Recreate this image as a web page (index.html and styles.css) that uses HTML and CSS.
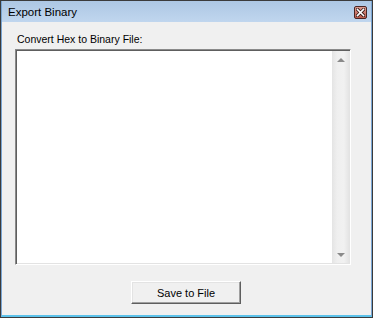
FILE: index.html
```html
<!DOCTYPE html>
<html lang="en">
<head>
    <meta charset="UTF-8">
    <title>Export Binary</title>
    <link rel="stylesheet" href="styles.css">
</head>
<body>

    <div class="window">
        <div class="titlebar">
            <span class="title">Export Binary</span>
            <span class="close">
                <svg width="9" height="9" viewBox="0 0 9 9">
                    <path d="M1.5 1.5 L7.5 7.5 M7.5 1.5 L1.5 7.5" stroke="#3a1a18" stroke-width="3.2" stroke-linecap="square"/>
                    <path d="M1.5 1.5 L7.5 7.5 M7.5 1.5 L1.5 7.5" stroke="#ffffff" stroke-width="1.6" stroke-linecap="square"/>
                </svg>
            </span>
        </div>

        <div class="content">
            <label for="hex" class="field-label">Convert Hex to Binary File:</label>
            <div class="editor">
                <div id="hex" class="editor-text"></div>
                <div class="scrollbar">
                    <span class="arrow arrow-up"></span>
                    <span class="track"></span>
                    <span class="arrow arrow-down"></span>
                </div>
            </div>
            <div class="actions">
                <button type="button" class="btn">Save to File</button>
            </div>
        </div>
    </div>

</body>
</html>
```

FILE: styles.css
```css
body {
    margin: 0;
    padding: 0;
    font-family: 'Liberation Sans', Arial, sans-serif;
    font-size: 11px;
    color: #000;
    background-color: #f0f0f0;
}

.window {
    width: 373px;
    height: 318px;
    box-sizing: border-box;
    border: 1px solid #3b3b3b;
    display: flex;
    flex-direction: column;
}

.titlebar {
    height: 21px;
    display: flex;
    align-items: center;
    justify-content: space-between;
    padding: 0 4px 0 6px;
    border-left: 1px solid #7aa6d4;
    border-right: 1px solid #7aa6d4;
    background: linear-gradient(#adc7e4, #c0d6ee);
}

.title {
    font-size: 11.5px;
    padding-top: 1px;
}

.close {
    width: 11px;
    height: 11px;
    margin-top: 1px;
    border: 1px solid #4a2523;
    border-radius: 2px;
    background: linear-gradient(#dc9c90, #bb5a4c);
    display: flex;
    align-items: center;
    justify-content: center;
}

.content {
    flex: 1;
    display: flex;
    flex-direction: column;
    padding: 11px 20px 0 13px;
    border-left: 1px solid #7aa6d4;
    border-right: 1px solid #7aa6d4;
    border-bottom: 2px solid #5cc2ea;
    background-color: #f0f0f0;
}

.field-label {
    display: block;
    padding-left: 2px;
    font-size: 10.5px;
    line-height: 13px;
    height: 13px;
    margin-bottom: 3px;
}

.editor {
    height: 216px;
    box-sizing: border-box;
    display: flex;
    border-top: 1px solid #8a8a8a;
    border-left: 1px solid #8a8a8a;
    border-right: 1px solid #ffffff;
    border-bottom: 1px solid #ffffff;
    box-shadow: inset 1px 1px 0 #5e5e5e, inset -1px -1px 0 #e3e3e3;
    background-color: #fff;
    padding: 1px;
}

.editor-text {
    flex: 1;
}

.scrollbar {
    width: 17px;
    display: flex;
    flex-direction: column;
    background: linear-gradient(90deg, #e4e4e4, #efefef 30%, #f1f1f1 70%, #e4e4e4);
}

.track {
    flex: 1;
}

.arrow {
    height: 17px;
    display: flex;
    align-items: center;
    justify-content: center;
}

.arrow::before {
    content: "";
    width: 0;
    height: 0;
    border-left: 4px solid transparent;
    border-right: 4px solid transparent;
}

.arrow-up::before {
    border-bottom: 4px solid #8a8a8a;
}

.arrow-down::before {
    border-top: 4px solid #8a8a8a;
}

.actions {
    display: flex;
    justify-content: center;
    padding: 16px 0 0 6px;
}

.btn {
    width: 110px;
    height: 23px;
    box-sizing: border-box;
    font-family: 'Liberation Sans', Arial, sans-serif;
    font-size: 11px;
    color: #000;
    background-color: #f0f0f0;
    border-top: 1px solid #ffffff;
    border-left: 1px solid #ffffff;
    border-right: 1px solid #5e5e5e;
    border-bottom: 1px solid #5e5e5e;
    box-shadow: inset -1px -1px 0 #a0a0a0, inset 1px 1px 0 #e3e3e3;
    padding: 0;
}
```
